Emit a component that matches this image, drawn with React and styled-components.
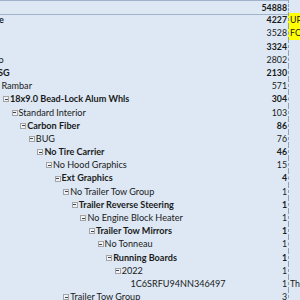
import React from 'react';
import styled, { createGlobalStyle } from 'styled-components';

const Global = createGlobalStyle`
    html, body {
        margin: 0;
        padding: 0;
        background: #dde8f4;
    }
`

const Viewport = styled.div`
    width: 300px;
    height: 300px;
    overflow: hidden;
    background: #dde8f4;
    font-family: Lato, "Liberation Sans", sans-serif;
    font-size: 9.1px;
    color: #1a1a1a;
`

const Sheet = styled.div`
    margin-left: -60px;
    display: flex;
    flex-direction: column;
`

const Row = styled.div`
    display: grid;
    grid-template-columns: 310px 38px 80px;
    height: 13.2px;
    line-height: 13.2px;
    font-weight: ${props => props.$bold ? 700 : 400};

    .label, .value {
        border-top: ${props => props.$head ? '1px solid #9fb4cc' : 'none'};
        border-bottom: ${props => props.$head ? '1px solid #9fb4cc' : 'none'};
    }
`

const Label = styled.div`
    display: flex;
    align-items: center;
    padding-left: ${props => 2.8 + props.$level * 8.6}px;
    white-space: nowrap;
    box-sizing: border-box;
`

const Toggle = styled.span`
    width: 4px;
    height: 4px;
    border: 1px solid #a4a4a4;
    background: #eef3f9;
    position: relative;
    flex: none;
    margin: 1px 1px 0 0;

    &::after {
        content: '';
        position: absolute;
        left: 0.5px;
        top: 1.5px;
        width: 3px;
        height: 1px;
        background: #444;
    }
`

const Spacer = styled.span`
    width: 7px;
    flex: none;
`

const Value = styled.div`
    text-align: right;
    padding-right: 1px;
    font-size: 8.8px;
    box-sizing: border-box;
`

const Note = styled.div`
    border-left: 1px dashed #8da4bf;
    padding-left: 1px;
    font-size: 8.8px;
    background: ${props => props.$mark ? '#ffff00' : 'transparent'};
    white-space: nowrap;
    font-weight: 400;
`

const rows = [
    { label: 'Total', level: 0, value: 54888, bold: true, head: true },
    { label: 'Hydro Blue', level: 1, value: 4227, bold: true, note: 'UP', mark: true },
    { label: 'Crew', level: 2, value: 3528, note: 'FO', mark: true },
    { label: '4x4', level: 3, value: 3324, bold: true },
    { label: 'Auto', level: 4, value: 2802 },
    { label: 'ESG', level: 5, value: 2130, bold: true },
    { label: 'Rambar', level: 6, value: 571 },
    { label: '18x9.0 Bead-Lock Alum Whls', level: 7, value: 304, bold: true },
    { label: 'Standard Interior', level: 8, value: 103 },
    { label: 'Carbon Fiber', level: 9, value: 86, bold: true },
    { label: 'BUG', level: 10, value: 76 },
    { label: 'No Tire Carrier', level: 11, value: 46, bold: true },
    { label: 'No Hood Graphics', level: 12, value: 15 },
    { label: 'Ext Graphics', level: 13, value: 4, bold: true },
    { label: 'No Trailer Tow Group', level: 14, value: 1 },
    { label: 'Trailer Reverse Steering', level: 15, value: 1, bold: true },
    { label: 'No Engine Block Heater', level: 16, value: 1 },
    { label: 'Trailer Tow Mirrors', level: 17, value: 1, bold: true },
    { label: 'No Tonneau', level: 18, value: 1 },
    { label: 'Running Boards', level: 19, value: 1, bold: true },
    { label: '2022', level: 20, value: 1 },
    { label: '1C6SRFU94NN346497', level: 21, value: 1, leaf: true, note: 'Th' },
    { label: 'Trailer Tow Group', level: 14, value: 3 },
]

const App = () => {
    return (
        <Viewport>
            <Global />
            <Sheet>
                {rows.map((r, i) => (
                    <Row key={i} $bold={r.bold} $head={r.head}>
                        <Label className='label' $level={r.level}>
                            {r.head || r.leaf ? <Spacer /> : <Toggle />}
                            <span>{r.label}</span>
                        </Label>
                        <Value className='value'>{r.value}</Value>
                        <Note $mark={r.mark}>{r.note}</Note>
                    </Row>
                ))}
            </Sheet>
        </Viewport>
    );
};

export default App;
